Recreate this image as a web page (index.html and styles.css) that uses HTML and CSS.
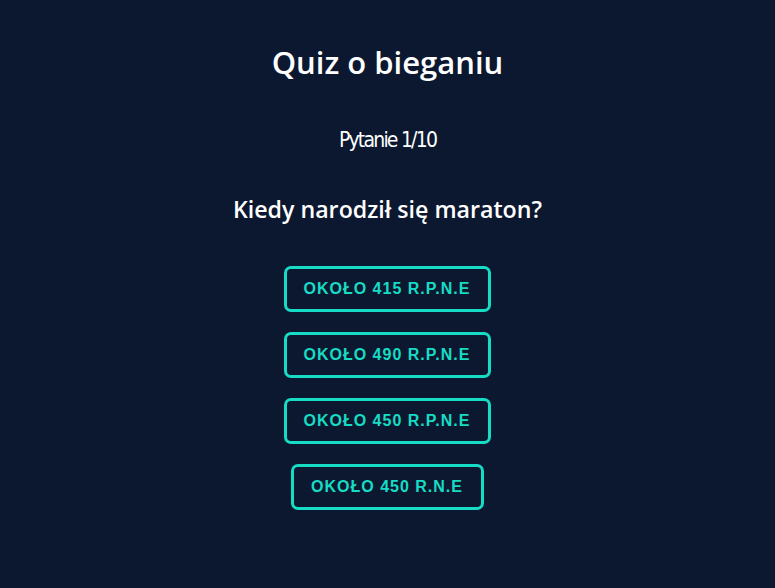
FILE: index.html
```html
<!DOCTYPE html>
<html lang="pl">
<head>
<meta charset="utf-8">
<title>Quiz o bieganiu</title>
<link rel="stylesheet" href="styles.css">
</head>
<body>
<main class="quiz">
  <h1 class="quiz-title">Quiz o bieganiu</h1>
  <p class="quiz-counter">Pytanie 1/10</p>
  <h2 class="quiz-question">Kiedy narodził się maraton?</h2>
  <div class="answers">
    <button class="answer">Około 415 r.p.n.e</button>
    <button class="answer">Około 490 r.p.n.e</button>
    <button class="answer">Około 450 r.p.n.e</button>
    <button class="answer">Około 450 r.n.e</button>
  </div>
</main>
</body>
</html>
```
FILE: styles.css
```css
html, body {
  margin: 0;
  padding: 0;
  background: #0b1830;
  height: 100%;
}
body {
  font-family: "Open Sans", "Liberation Sans", sans-serif;
  color: #ffffff;
}
.quiz {
  display: flex;
  flex-direction: column;
  align-items: center;
  padding-top: 42px;
}
.quiz-title {
  margin: 0;
  font-size: 31px;
  font-weight: 600;
  line-height: 40px;
}
.quiz-counter {
  margin: 45px 0 0;
  font-family: "DejaVu Sans", sans-serif;
  font-stretch: condensed;
  font-size: 21px;
  letter-spacing: -1.8px;
  line-height: 26px;
}
.quiz-question {
  margin: 41px 0 0;
  font-size: 23.2px;
  font-weight: 600;
  line-height: 30px;
}
.answers {
  display: flex;
  flex-direction: column;
  align-items: center;
  gap: 20px;
  margin-top: 42px;
}
.answer {
  background: transparent;
  border: 3px solid #17dcc4;
  border-radius: 7px;
  color: #17dcc4;
  font-family: "Liberation Sans", Arial, sans-serif;
  font-weight: 700;
  font-size: 16px;
  letter-spacing: 1px;
  text-transform: uppercase;
  line-height: 18px;
  padding: 11px 18px 11px 17px;
  cursor: pointer;
}
```
